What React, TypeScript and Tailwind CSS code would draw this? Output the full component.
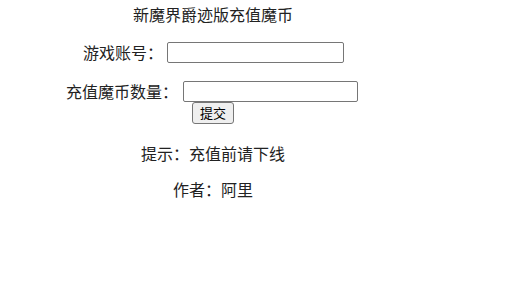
import React from "react";

export default function App() {
  const font = { fontFamily: '"Noto Sans CJK SC", "Microsoft YaHei", sans-serif' };
  return (
    <div className="w-[426px] flex flex-col items-center text-[16px] text-[#222] bg-white" style={font}>
      <div className="mt-[2px] h-[24px] leading-[24px]">新魔界爵迹版充值魔币</div>
      <div className="mt-[16px] flex items-center gap-[4px] pl-[1px]">
        <span className="leading-[21px]">游戏账号：</span>
        <input type="text" className="w-[177px] h-[21px] border border-[#767676] rounded-[2px] bg-white outline-none" />
      </div>
      <div className="mt-[18px] flex items-center gap-[5px] pr-[2px]">
        <span className="leading-[21px]">充值魔币数量：</span>
        <input type="text" className="w-[175px] h-[21px] border border-[#767676] rounded-[2px] bg-white outline-none" />
      </div>
      <button className="mt-[0px] w-[42px] h-[22px] border border-[#767676] rounded-[3px] bg-[#efefef] text-[13px] leading-[20px] text-black">提交</button>
      <div className="mt-[17px] h-[24px] leading-[24px]">提示：充值前请下线</div>
      <div className="mt-[12px] h-[24px] leading-[24px]">作者：阿里</div>
    </div>
  );
}
